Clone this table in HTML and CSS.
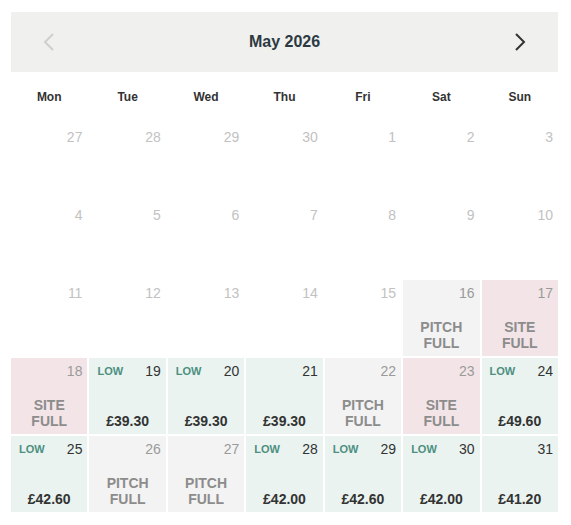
FILE: index.html
```html
<!DOCTYPE html>
<html lang="en">

<head>
    <meta charset="UTF-8">
    <title>May 2026</title>
    <link rel="stylesheet" href="styles.css">
</head>

<body>
    <section class="calendar">
        <header class="cal-head">
            <button class="nav prev" aria-label="Previous month">
                <svg width="12" height="20" viewBox="0 0 12 20"><path d="M10 2 L2 10 L10 18" fill="none" stroke="currentColor" stroke-width="2"/></svg>
            </button>
            <h2 class="cal-title">May 2026</h2>
            <button class="nav next" aria-label="Next month">
                <svg width="12" height="20" viewBox="0 0 12 20"><path d="M2 2 L10 10 L2 18" fill="none" stroke="currentColor" stroke-width="2"/></svg>
            </button>
        </header>

        <div class="weekdays">
            <span>Mon</span><span>Tue</span><span>Wed</span><span>Thu</span><span>Fri</span><span>Sat</span><span>Sun</span>
        </div>

        <div class="days">
            <div class="day past"><div class="top"><span class="num">27</span></div></div>
            <div class="day past"><div class="top"><span class="num">28</span></div></div>
            <div class="day past"><div class="top"><span class="num">29</span></div></div>
            <div class="day past"><div class="top"><span class="num">30</span></div></div>
            <div class="day past"><div class="top"><span class="num">1</span></div></div>
            <div class="day past"><div class="top"><span class="num">2</span></div></div>
            <div class="day past"><div class="top"><span class="num">3</span></div></div>

            <div class="day past"><div class="top"><span class="num">4</span></div></div>
            <div class="day past"><div class="top"><span class="num">5</span></div></div>
            <div class="day past"><div class="top"><span class="num">6</span></div></div>
            <div class="day past"><div class="top"><span class="num">7</span></div></div>
            <div class="day past"><div class="top"><span class="num">8</span></div></div>
            <div class="day past"><div class="top"><span class="num">9</span></div></div>
            <div class="day past"><div class="top"><span class="num">10</span></div></div>

            <div class="day past"><div class="top"><span class="num">11</span></div></div>
            <div class="day past"><div class="top"><span class="num">12</span></div></div>
            <div class="day past"><div class="top"><span class="num">13</span></div></div>
            <div class="day past"><div class="top"><span class="num">14</span></div></div>
            <div class="day past"><div class="top"><span class="num">15</span></div></div>
            <div class="day pitch"><div class="top"><span class="num">16</span></div><div class="status">PITCH<br>FULL</div></div>
            <div class="day site"><div class="top"><span class="num">17</span></div><div class="status">SITE<br>FULL</div></div>

            <div class="day site"><div class="top"><span class="num">18</span></div><div class="status">SITE<br>FULL</div></div>
            <div class="day open"><div class="top"><span class="low">LOW</span><span class="num">19</span></div><div class="price">£39.30</div></div>
            <div class="day open"><div class="top"><span class="low">LOW</span><span class="num">20</span></div><div class="price">£39.30</div></div>
            <div class="day open"><div class="top"><span class="num">21</span></div><div class="price">£39.30</div></div>
            <div class="day pitch"><div class="top"><span class="num">22</span></div><div class="status">PITCH<br>FULL</div></div>
            <div class="day site"><div class="top"><span class="num">23</span></div><div class="status">SITE<br>FULL</div></div>
            <div class="day open"><div class="top"><span class="low">LOW</span><span class="num">24</span></div><div class="price">£49.60</div></div>

            <div class="day open"><div class="top"><span class="low">LOW</span><span class="num">25</span></div><div class="price">£42.60</div></div>
            <div class="day pitch"><div class="top"><span class="num">26</span></div><div class="status">PITCH<br>FULL</div></div>
            <div class="day pitch"><div class="top"><span class="num">27</span></div><div class="status">PITCH<br>FULL</div></div>
            <div class="day open"><div class="top"><span class="low">LOW</span><span class="num">28</span></div><div class="price">£42.00</div></div>
            <div class="day open"><div class="top"><span class="low">LOW</span><span class="num">29</span></div><div class="price">£42.60</div></div>
            <div class="day open"><div class="top"><span class="low">LOW</span><span class="num">30</span></div><div class="price">£42.00</div></div>
            <div class="day open"><div class="top"><span class="num">31</span></div><div class="price">£41.20</div></div>
        </div>
    </section>
</body>

</html>
```

FILE: styles.css
```css
body {
    margin: 0;
    background-color: white;
    font-family: "Liberation Sans", Arial, sans-serif;
    color: #333;
}

.calendar {
    width: 547px;
    margin: 12px 11px;
}

.cal-head {
    height: 60px;
    background-color: #f0f0ef;
    display: flex;
    align-items: center;
    justify-content: space-between;
    padding: 0 32px;
}

.cal-title {
    margin: 0;
    font-size: 16px;
    font-weight: bold;
    color: #2c3a42;
}

.nav {
    border: 0;
    background: none;
    padding: 0;
    display: flex;
}

.prev {
    color: #cfcfcf;
}

.next {
    color: #333;
}

.weekdays {
    display: grid;
    grid-template-columns: repeat(7, 1fr);
    gap: 2px;
    padding: 17px 0 19px;
    font-size: 12px;
    font-weight: bold;
    line-height: 16px;
    text-align: center;
    color: #333;
}

.days {
    display: grid;
    grid-template-columns: repeat(7, 1fr);
    grid-auto-rows: 76px;
    gap: 2px;
}

.day {
    display: flex;
    flex-direction: column;
    padding: 5px 5px 5px 8px;
}

.top {
    display: flex;
    justify-content: space-between;
    align-items: center;
    line-height: 16px;
}

.num {
    margin-left: auto;
    font-size: 14px;
}

.low {
    font-size: 11px;
    font-weight: bold;
    color: #4d8f80;
}

.status,
.price {
    margin-top: auto;
    text-align: center;
    font-size: 14px;
    font-weight: bold;
    line-height: 16px;
    padding-right: 3px;
}

.status {
    color: #8c8c8c;
}

.price {
    color: #333;
}

.past .num {
    color: #c2c2c2;
}

.pitch {
    background-color: #f3f3f3;
}

.site {
    background-color: #f3e5e7;
}

.pitch .num,
.site .num {
    color: #9a9a9a;
}

.open {
    background-color: #eaf3f0;
}
```
